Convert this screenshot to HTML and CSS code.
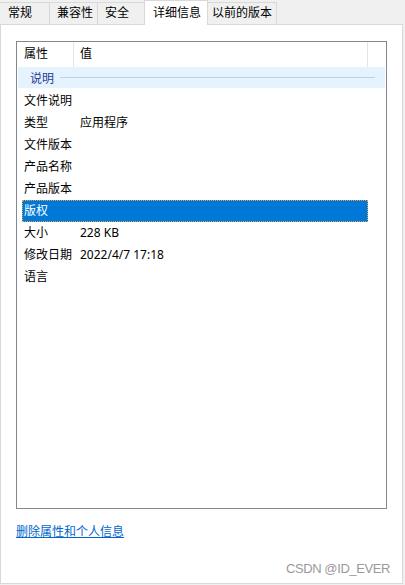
FILE: index.html
```html
<!DOCTYPE html>
<html lang="zh-CN">
<head>
    <meta charset="UTF-8">
    <meta name="viewport" content="width=device-width, initial-scale=1.0">
    <title>属性 - 详细信息</title>
    <link rel="stylesheet" href="styles.css">
</head>
<body>

<div class="tabs">
    <div class="tab tab-general">常规</div>
    <div class="tab tab-compat">兼容性</div>
    <div class="tab tab-security">安全</div>
    <div class="tab tab-details active">详细信息</div>
    <div class="tab tab-prev">以前的版本</div>
</div>

<div class="panel">
    <div class="list">
        <div class="list-header">
            <div class="hcol hcol-name">属性</div>
            <div class="hcol hcol-value">值</div>
            <div class="hcol hcol-rest"></div>
        </div>

        <div class="group">
            <span class="group-title">说明</span>
            <span class="group-line"></span>
        </div>

        <div class="rows">
            <div class="row"><span class="cell-name">文件说明</span><span class="cell-value"></span></div>
            <div class="row"><span class="cell-name">类型</span><span class="cell-value">应用程序</span></div>
            <div class="row"><span class="cell-name">文件版本</span><span class="cell-value"></span></div>
            <div class="row"><span class="cell-name">产品名称</span><span class="cell-value"></span></div>
            <div class="row"><span class="cell-name">产品版本</span><span class="cell-value"></span></div>
            <div class="row selected"><span class="cell-name">版权</span><span class="cell-value"></span></div>
            <div class="row"><span class="cell-name">大小</span><span class="cell-value">228 KB</span></div>
            <div class="row"><span class="cell-name">修改日期</span><span class="cell-value">2022/4/7 17:18</span></div>
            <div class="row"><span class="cell-name">语言</span><span class="cell-value"></span></div>
        </div>
    </div>

    <a class="remove-link" href="#">删除属性和个人信息</a>
</div>

<div class="watermark">CSDN @ID_EVER</div>

</body>
</html>
```

FILE: styles.css
```css
body {
    margin: 0;
    padding: 0;
    background-color: #f0f0f0;
    font-family: "Noto Sans", "Noto Sans CJK SC", sans-serif;
    font-size: 12px;
    color: #000;
    position: relative;
    height: 585px;
    overflow: hidden;
}

/* tab strip */
.tabs {
    display: flex;
    align-items: flex-end;
    height: 24px;
}
.tab {
    box-sizing: border-box;
    height: 22px;
    line-height: 20px;
    padding-left: 7px;
    border: 1px solid #d9d9d9;
    border-bottom: none;
    margin-left: -1px;
    background-color: #f0f0f0;
    white-space: nowrap;
}
.tab-general {
    margin-left: 0;
    border-left: none;
    width: 50px;
    padding-left: 8px;
}
.tab-compat { width: 49px; }
.tab-security { width: 48px; }
.tab-details { width: 64px; }
.tab-prev { width: 70px; padding-left: 4px; }
.tab.active {
    height: 25px;
    line-height: 23px;
    background-color: #fff;
    padding-left: 8px;
    position: relative;
    z-index: 1;
    margin-bottom: -1px;
}

/* panel */
.panel {
    box-sizing: border-box;
    width: 403px;
    height: 560px;
    background-color: #fff;
    border: 1px solid #d9d9d9;
    padding: 16px 0 0 15px;
}

.list {
    box-sizing: border-box;
    width: 371px;
    height: 468px;
    border: 1px solid #828790;
}
.list-header {
    display: flex;
    height: 25px;
    line-height: 24px;
}
.hcol {
    box-sizing: border-box;
    border-right: 1px solid #e5e5e5;
}
.hcol-name { width: 57px; padding-left: 7px; }
.hcol-value { width: 294px; padding-left: 6px; }
.hcol-rest { flex: 1; border-right: none; }

.group {
    display: flex;
    align-items: center;
    height: 21px;
    margin: 0 1px;
    padding: 0 10px 0 12px;
    background-color: #e5f3ff;
}
.group-title {
    color: #1e3c96;
}
.group-line {
    flex: 1;
    height: 1px;
    margin-left: 6px;
    background-color: #b8d2ef;
}

.rows {
    padding-top: 2px;
}
.row {
    box-sizing: border-box;
    display: flex;
    width: 346px;
    height: 22px;
    line-height: 22px;
    margin-left: 5px;
    padding-left: 2px;
}
.cell-name { width: 56px; }
.row.selected {
    background-color: #0078d7;
    color: #fff;
    outline: 1px dotted #f0a040;
    outline-offset: -1px;
}

.remove-link {
    display: inline-block;
    margin-top: 15px;
    color: #0066cc;
    text-decoration: underline;
    line-height: 16px;
}

.watermark {
    position: absolute;
    right: 15px;
    top: 561px;
    font-family: "Liberation Sans", Arial, sans-serif;
    font-size: 13px;
    letter-spacing: -0.4px;
    color: #9a9a9a;
}
```
